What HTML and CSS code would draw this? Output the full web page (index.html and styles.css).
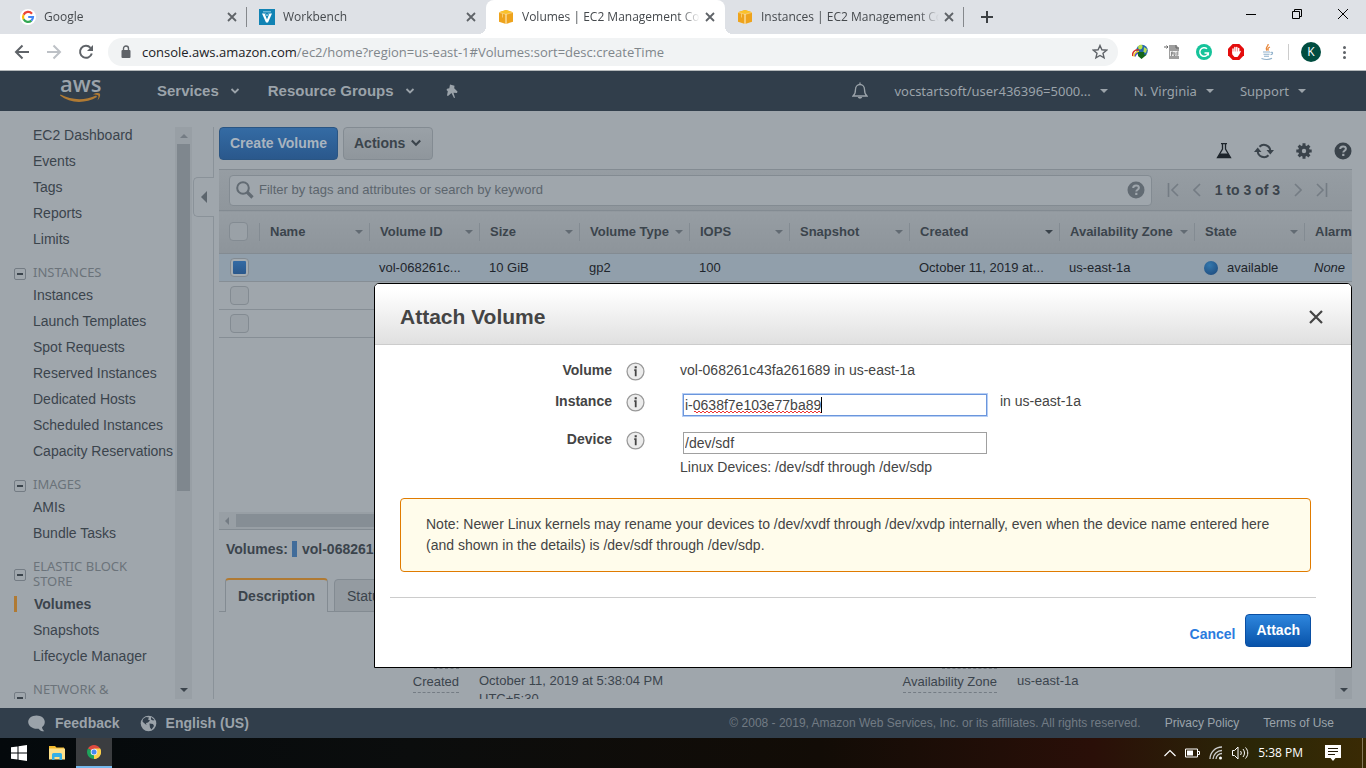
FILE: index.html
```html
<!DOCTYPE html>
<html lang="en">
<head>
<meta charset="utf-8">
<title>Volumes | EC2 Management Console</title>
<link rel="stylesheet" href="styles.css">
</head>
<body>
<svg class="defs" width="0" height="0" aria-hidden="true">
  <symbol id="x" viewBox="0 0 10 10"><path d="M1 1l8 8M9 1L1 9" fill="none" stroke="currentColor" stroke-width="1.800"/></symbol>
  <symbol id="cube" viewBox="0 0 16 16">
    <path d="M1 3.200L8 1l7 2.200v9.600L8 15l-7-2.200z" fill="#eea31c"/>
    <path d="M1 3.200L8 1l7 2.200L8 5z" fill="#fbc22a"/>
    <path d="M8 5v10" fill="none" stroke="#fff3cf" stroke-width="1"/>
    <path d="M1 3.400l7 1.900 7-1.900" fill="none" stroke="#fbe3a6" stroke-width=".6"/>
    <path d="M4.500 4.500v4" stroke="#fbdc8e" stroke-width=".7"/>
  </symbol>
  <symbol id="chev" viewBox="0 0 10 8"><path d="M1.500 2l3.500 3.500L8.500 2" fill="none" stroke="currentColor" stroke-width="1.800"/></symbol>
  <symbol id="help" viewBox="0 0 18 18"><circle cx="9" cy="9" r="8.500" fill="currentColor"/><path d="M6.200 7.100c0-1.700 1.200-2.700 2.900-2.700s2.800 1 2.800 2.400c0 1.900-2.600 1.900-2.600 3.800" fill="none" stroke="#9fa6ac" stroke-width="2"/><rect x="8.200" y="11.800" width="2.200" height="2.200" fill="#9fa6ac"/></symbol>
  <symbol id="info" viewBox="0 0 18 18"><circle cx="9" cy="9" r="8" fill="#ececec" stroke="#999" stroke-width="1.200"/><path d="M7.800 7.700H9.200V13.600" fill="none" stroke="#444" stroke-width="1.700"/><rect x="8.200" y="4" width="2" height="2" fill="#444"/></symbol>
</svg>

<header class="browser">
  <div class="tabs">
    <div class="tab">
      <svg class="fav" viewBox="0 0 16 16"><circle cx="8" cy="8" r="8" fill="#fff"/><path d="M12 4.700A5 5 0 0 0 3.600 5.700" fill="none" stroke="#ea4335" stroke-width="2.200"/><path d="M3.600 5.700a5 5 0 0 0 0 4.700" fill="none" stroke="#fbbc05" stroke-width="2.200"/><path d="M3.600 10.300a5 5 0 0 0 7.800 1.300" fill="none" stroke="#34a853" stroke-width="2.200"/><path d="M11.300 11.700A5 5 0 0 0 13 8H8.200" fill="none" stroke="#4285f4" stroke-width="2.200"/></svg>
      <span class="tab-title">Google</span>
      <button class="tab-x" aria-label="Close tab"><svg><use href="#x"/></svg></button>
    </div>
    <div class="tab">
      <svg class="fav" viewBox="0 0 16 16"><rect width="16" height="16" fill="#1183b4"/><path d="M3 4.500h2.600L8 10.500l2.400-6H13L9 13.500H7z" fill="#fff"/><path d="M4 2.800h8M6.500 4.500L8 7l1.500-2.500" fill="none" stroke="#b6deef" stroke-width=".8"/></svg>
      <span class="tab-title">Workbench</span>
      <button class="tab-x" aria-label="Close tab"><svg><use href="#x"/></svg></button>
    </div>
    <div class="tab active">
      <svg class="fav"><use href="#cube"/></svg>
      <span class="tab-title">Volumes | EC2 Management Console</span>
      <button class="tab-x" aria-label="Close tab"><svg><use href="#x"/></svg></button>
    </div>
    <div class="tab">
      <svg class="fav"><use href="#cube"/></svg>
      <span class="tab-title">Instances | EC2 Management Console</span>
      <button class="tab-x" aria-label="Close tab"><svg><use href="#x"/></svg></button>
    </div>
    <button class="new-tab" aria-label="New tab"><svg width="12" height="12" viewBox="0 0 12 12"><path d="M6 0v12M0 6h12" stroke="#3c4043" stroke-width="2"/></svg></button>
    <div class="win">
      <button aria-label="Minimize"><svg width="10" height="10" viewBox="0 0 10 10"><path d="M0 5.500h10" stroke="#000"/></svg></button>
      <button aria-label="Restore"><svg width="10" height="10" viewBox="0 0 10 10"><path d="M.5 2.500h7v7h-7zM2.500 2.500v-2h7v7h-2" fill="none" stroke="#000"/></svg></button>
      <button aria-label="Close"><svg width="10" height="10" viewBox="0 0 10 10"><path d="M0 0l10 10M10 0L0 10" stroke="#000"/></svg></button>
    </div>
  </div>
  <div class="toolbar">
    <button class="tool" aria-label="Back"><svg width="16" height="16" viewBox="0 0 16 16"><path d="M15 8H2M8.500 1.500L2 8l6.500 6.500" fill="none" stroke="#5f6368" stroke-width="2"/></svg></button>
    <button class="tool" aria-label="Forward"><svg width="16" height="16" viewBox="0 0 16 16"><path d="M1 8h13M7.500 1.500L14 8l-6.500 6.500" fill="none" stroke="#bdc1c6" stroke-width="2"/></svg></button>
    <button class="tool" aria-label="Reload"><svg width="16" height="16" viewBox="0 0 16 16"><path d="M13.800 9.500A6 6 0 1 1 12.500 3.800" fill="none" stroke="#5f6368" stroke-width="2"/><path d="M15 1v6H9z" fill="#5f6368"/></svg></button>
    <div class="omni">
      <svg width="10" height="14" viewBox="0 0 10 14"><rect x="0.500" y="5" width="9" height="8" rx="1" fill="#5f6368"/><path d="M2.500 5.500V3.500a2.500 2.500 0 0 1 5 0v2" fill="none" stroke="#5f6368" stroke-width="1.400"/></svg>
      <span class="url">console.aws.amazon.com<span>/ec2/home?region=us-east-1#Volumes:sort=desc:createTime</span></span>
      <button aria-label="Bookmark"><svg width="16" height="16" viewBox="0 0 16 16"><path d="M8 1.500l1.900 4.300 4.700.4-3.600 3.100 1.100 4.600L8 11.500l-4.100 2.400L5 9.300 1.400 6.200l4.700-.4z" fill="none" stroke="#5f6368" stroke-width="1.400"/></svg></button>
    </div>
    <div class="exts">
      <svg width="16" height="16" viewBox="0 0 16 16"><circle cx="10" cy="6.500" r="5.800" fill="#2566ae"/><path d="M6 2.500c2-2.500 5-2 4.500.5S8 6 6.500 5zM12 3l3 2-1 4-2.500-1z" fill="#b9e04c"/><path d="M.8 12a5 5 0 0 1 6-6" fill="none" stroke="#d33226" stroke-width="1.500"/><path d="M2 12.500a5 5 0 0 1 5-5" fill="none" stroke="#f5d21d" stroke-width="1.500"/><path d="M3.200 12.500A4 4 0 0 1 7 9" fill="none" stroke="#4c54c8" stroke-width="1.300"/><path d="M6 8h6v2.500h3L9.500 15 6 12z" fill="#14661a"/></svg>
      <svg width="16" height="16" viewBox="0 0 16 16"><path d="M5 1h7l3 3v11H5z" fill="#9e9e9e"/><path d="M12 1v3h3M0 3h4M2.500 1.500L4 3 2.500 4.500" fill="none" stroke="#666"/><rect x="6" y="7" width="9" height="5" fill="#f1f1f1"/><path d="M7.500 12V8h1.300v2H7.500M10 8v3.500h1V8.500M13 12V8h1.500M13 10h1.500" fill="none" stroke="#777" stroke-width=".8"/></svg>
      <svg width="16" height="16" viewBox="0 0 16 16"><circle cx="8" cy="8" r="8" fill="#15c39a"/><path d="M11 4.800A4.300 4.300 0 1 0 12.300 9H8.500M12.300 8.500v3" fill="none" stroke="#fff" stroke-width="1.500"/></svg>
      <svg width="16" height="16" viewBox="0 0 16 16"><path d="M4.700 0h6.600L16 4.700v6.600L11.300 16H4.700L0 11.300V4.700z" fill="#e40d0d"/><path d="M5 9V5M6.900 8V3.500M8.800 8V3.500M10.700 9V4.500" stroke="#fff" stroke-width="1.500" stroke-linecap="round"/><path d="M4.300 7.500h7l1-.8.600.8-1.900 3.500-1.500 2H6.500L4.300 10.500z" fill="#fff"/></svg>
      <svg width="14" height="16" viewBox="0 0 14 16"><path d="M8 0c1 2-3.500 3.500-1 6.500M10 3c-2 .8-2.800 2-1.500 3.500" fill="none" stroke="#e8873b" stroke-width="1.300"/><path d="M3 8h7M3.500 10.300h6M4 12.300h5M1.500 14.500c3 1 8 1 10.500-.2M10.500 8.500c3-1 2.500 1.800 0 2.300" fill="none" stroke="#8fb0ca" stroke-width="1.100"/></svg>
    </div>
    <span class="profile">K</span>
    <button class="dots" aria-label="Menu"><i></i><i></i><i></i></button>
  </div>
</header>

<nav class="aws-nav">
  <a class="logo" href="#" aria-label="aws"><svg width="42" height="28" viewBox="0 0 42 28"><text x="0" y="15" class="logo-text">aws</text><path d="M0 18.500c10 8 25 8.500 37 1.500l-.8-1.500C25 23.500 12 23.500.5 17.500z" fill="#b07a33"/><path d="M33 17.500c3-1.800 6-1.600 7-.8.700 1.500-.5 4.800-2.500 6.800.600-2 1.400-4 .8-5-.9-.9-3-.8-5.300-1z" fill="#b07a33"/></svg></a>
  <button class="menu big services">Services<svg width="10" height="8"><use href="#chev"/></svg></button>
  <button class="menu big">Resource Groups<svg width="10" height="8"><use href="#chev"/></svg></button>
  <button class="pin" aria-label="Pin"><svg width="14" height="15" viewBox="0 0 14 15"><path d="M5 .5l4.500 1.200-.3 2.600 3.300 3.200-.5 1.500-3.500-.3 1.500 5-1 .3-2.500-5L3 12l-1-.6.800-4.200L1.500 6l.6-1.200 2.200-.6z" fill="#9ba3aa"/></svg></button>
  <button class="bell" aria-label="Notifications"><svg width="16" height="18" viewBox="0 0 16 18"><path d="M1 14c2-1.500 2.500-3 2.500-6.500C3.500 4.500 5.500 2.500 8 2.500s4.500 2 4.500 5C12.500 11 13 12.500 15 14zM8 2.500V.5" fill="none" stroke="#9ba3aa" stroke-width="1.300"/><path d="M5.800 15h4.400c-.5 2.300-3.900 2.300-4.400 0z" fill="#9ba3aa"/></svg></button>
  <button class="menu">vocstartsoft/user436396=5000...<i class="tri"></i></button>
  <button class="menu">N. Virginia<i class="tri"></i></button>
  <button class="menu">Support<i class="tri"></i></button>
</nav>

<div class="console">
  <aside class="side">
    <div class="side-list">
      <ul>
        <li><a href="#">EC2 Dashboard</a></li>
        <li><a href="#">Events</a></li>
        <li><a href="#">Tags</a></li>
        <li><a href="#">Reports</a></li>
        <li><a href="#">Limits</a></li>
      </ul>
      <h3><button aria-label="Collapse"></button><span>INSTANCES</span></h3>
      <ul>
        <li><a href="#">Instances</a></li>
        <li><a href="#">Launch Templates</a></li>
        <li><a href="#">Spot Requests</a></li>
        <li><a href="#">Reserved Instances</a></li>
        <li><a href="#">Dedicated Hosts</a></li>
        <li><a href="#">Scheduled Instances</a></li>
        <li><a href="#">Capacity Reservations</a></li>
      </ul>
      <h3><button aria-label="Collapse"></button><span>IMAGES</span></h3>
      <ul>
        <li><a href="#">AMIs</a></li>
        <li><a href="#">Bundle Tasks</a></li>
      </ul>
      <h3><button aria-label="Collapse"></button><span>ELASTIC BLOCK STORE</span></h3>
      <ul>
        <li class="current"><a href="#">Volumes</a></li>
        <li><a href="#">Snapshots</a></li>
        <li><a href="#">Lifecycle Manager</a></li>
      </ul>
      <h3><button aria-label="Collapse"></button><span>NETWORK &amp; SECURITY</span></h3>
    </div>
    <div class="vbar"><i class="up"></i><b></b><i class="down"></i></div>
  </aside>
  <div class="split"><button aria-label="Hide navigation"><i></i></button></div>

  <main class="main">
    <div class="actions">
      <button class="btn primary">Create Volume</button>
      <button class="btn plain">Actions<svg width="12" height="10"><use href="#chev"/></svg></button>
      <div class="action-icons">
        <button aria-label="Experiments"><svg width="16" height="16" viewBox="0 0 16 16"><path d="M5 .7h6M6.500 1v5L1.500 14.500h13L9.500 6V1" fill="none" stroke="#1d242b" stroke-width="1.300"/><path d="M4 10.500h8l2.800 4.500H1.200z" fill="#1d242b"/></svg></button>
        <button aria-label="Refresh"><svg width="20" height="18" viewBox="0 0 20 18"><path d="M5.500 4.800a6.300 6.300 0 0 1 10.800 3.700M14.500 13.200A6.300 6.300 0 0 1 3.700 9.500" fill="none" stroke="#3a434b" stroke-width="2"/><path d="M12.500 8H20l-3.700 4.500zM0 10h7.500L3.700 5.500z" fill="#3a434b"/></svg></button>
        <button aria-label="Settings"><svg width="16" height="16" viewBox="0 0 16 16"><circle cx="8" cy="8" r="4" fill="none" stroke="#3a434b" stroke-width="3.600"/><path d="M8 .3v15.400M.3 8h15.400M2.600 2.600l10.800 10.800M13.400 2.600L2.600 13.400" stroke="#3a434b" stroke-width="3"/><circle cx="8" cy="8" r="2.200" fill="#9fa6ac"/></svg></button>
        <button aria-label="Help"><svg width="18" height="18"><use href="#help"/></svg></button>
      </div>
    </div>
    <div class="filter">
      <div class="search">
        <svg width="18" height="18" viewBox="0 0 18 18"><circle cx="7" cy="7" r="5.800" fill="none" stroke="#626b73" stroke-width="2"/><path d="M11 11l5.500 5.500" stroke="#626b73" stroke-width="3.200"/></svg>
        <input type="text" aria-label="Filter volumes" placeholder="Filter by tags and attributes or search by keyword">
        <button aria-label="Filter help"><svg width="18" height="18"><use href="#help"/></svg></button>
      </div>
      <div class="pager">
        <button aria-label="First page"><svg width="12" height="14" viewBox="0 0 12 14"><path d="M1.500 0v14M11 1L5 7l6 6" fill="none" stroke="#747c84" stroke-width="1.600"/></svg></button>
        <button aria-label="Previous page"><svg width="8" height="14" viewBox="0 0 8 14"><path d="M7 1L1 7l6 6" fill="none" stroke="#747c84" stroke-width="1.600"/></svg></button>
        <span>1 to 3 of 3</span>
        <button aria-label="Next page"><svg width="8" height="14" viewBox="0 0 8 14"><path d="M1 1l6 6-6 6" fill="none" stroke="#747c84" stroke-width="1.600"/></svg></button>
        <button aria-label="Last page"><svg width="12" height="14" viewBox="0 0 12 14"><path d="M10.500 0v14M1 1l6 6-6 6" fill="none" stroke="#747c84" stroke-width="1.600"/></svg></button>
      </div>
    </div>
    <div class="grid-pane">
      <table>
        <colgroup><col class="w40"><col class="w110"><col class="w110"><col class="w100"><col class="w110"><col class="w100"><col class="w120"><col class="w150"><col class="w135"><col class="w110"><col class="w110"></colgroup>
        <thead>
          <tr>
            <th><input type="checkbox" aria-label="Select all"></th>
            <th><div>Name<i class="tri"></i></div></th>
            <th><div>Volume ID<i class="tri"></i></div></th>
            <th><div>Size<i class="tri"></i></div></th>
            <th><div>Volume Type<i class="tri"></i></div></th>
            <th><div>IOPS<i class="tri"></i></div></th>
            <th><div>Snapshot<i class="tri"></i></div></th>
            <th><div>Created<i class="tri sorted"></i></div></th>
            <th><div>Availability Zone<i class="tri"></i></div></th>
            <th><div>State<i class="tri"></i></div></th>
            <th><div>Alarm Status</div></th>
          </tr>
        </thead>
        <tbody>
          <tr class="selected">
            <td><input type="checkbox" checked aria-label="Select volume"></td>
            <td></td><td>vol-068261c...</td><td>10 GiB</td><td>gp2</td><td>100</td><td></td>
            <td>October 11, 2019 at...</td><td>us-east-1a</td>
            <td><span class="state"><i></i>available</span></td><td><em>None</em></td>
          </tr>
          <tr><td><input type="checkbox" aria-label="Select volume"></td><td></td><td></td><td></td><td></td><td></td><td></td><td></td><td></td><td></td><td></td></tr>
          <tr><td><input type="checkbox" aria-label="Select volume"></td><td></td><td></td><td></td><td></td><td></td><td></td><td></td><td></td><td></td><td></td></tr>
        </tbody>
      </table>
    </div>
    <div class="hbar"><i></i><b></b></div>
    <div class="picked">Volumes:<i></i>vol-068261c43fa261689</div>
    <div class="subtabs"><button class="on">Description</button><button>Status Checks</button></div>
    <div class="details">
      <dl>
        <div><dt><span>Volume ID</span></dt><dd>vol-068261c43fa261689</dd></div>
        <div><dt><span>Alarm status</span></dt><dd>None</dd></div>
        <div><dt><span>Size</span></dt><dd>10 GiB</dd></div>
        <div><dt><span>Snapshot</span></dt><dd></dd></div>
        <div><dt><span>Created</span></dt><dd>October 11, 2019 at 5:38:04 PM<br>UTC+5:30</dd></div>
        <div><dt><span>Availability Zone</span></dt><dd>us-east-1a</dd></div>
      </dl>
      <div class="vbar"><i class="down"></i></div>
    </div>
  </main>
</div>

<footer class="aws-foot">
  <a class="strong" href="#"><svg width="18" height="17" viewBox="0 0 18 17"><path d="M8.500.5c4.700 0 8.300 2.800 8.300 6.500 0 2.400-1.400 4.200-2.800 5.300.200 1.500.8 2.700 2.300 4-2.200.3-4.500-.8-5.700-2.600C4.800 14.500.2 11 .2 7 .2 3.300 3.800.5 8.500.5z" fill="#9ba3aa"/></svg>Feedback</a>
  <a class="strong" href="#"><svg width="17" height="17" viewBox="0 0 17 17"><circle cx="8.500" cy="8.500" r="7.800" fill="#9ba3aa"/><path d="M3 4l3-2 3 .5-1 2 2 1-2 2-2 .5.500 2L4 8 2.500 6.500zM11 2l3.500 3-1.500.5-2-1zM9.500 8.500l3.500.5 1 2-2.500 3.500-1.500-2z" fill="#313e4b"/></svg>English (US)</a>
  <span class="copy">© 2008 - 2019, Amazon Web Services, Inc. or its affiliates. All rights reserved.</span>
  <a href="#">Privacy Policy</a>
  <a href="#">Terms of Use</a>
</footer>

<div class="taskbar">
  <button aria-label="Start"><svg width="16" height="16" viewBox="0 0 16 16"><path d="M0 2.300L6.500 1.400v6.100H0zM7.500 1.200L16 0v7.500H7.500zM0 8.500h6.500v6.100L0 13.700zM7.500 8.500H16V16l-8.500-1.200z" fill="#fff"/></svg></button>
  <button aria-label="File Explorer"><svg width="16" height="16" viewBox="0 0 16 16"><path d="M0 1h6l1.500 1.500H15V5H0z" fill="#f3b92c"/><rect y="3.500" width="16" height="11" fill="#fde08a"/><path d="M3 15V9.500a1.500 1.500 0 0 1 1.500-1.500h7A1.500 1.500 0 0 1 13 9.500V15h-2.500v-3h-5v3z" fill="#35b0e6"/></svg></button>
  <button class="running" aria-label="Google Chrome"><svg width="14" height="14" viewBox="0 0 14 14"><path d="M7 7L.94 3.500A7 7 0 0 1 13.060 3.500z" fill="#e04a3f"/><path d="M7 7l6.060-3.500A7 7 0 0 1 7 14z" fill="#fdd04a"/><path d="M7 7v7A7 7 0 0 1 .94 3.500z" fill="#1ea35a"/><path d="M7 3.600h6.100A7 7 0 0 1 7 14l3-5.200z" fill="#fdd04a"/><circle cx="7" cy="7" r="3.300" fill="#f1f1f1"/><circle cx="7" cy="7" r="2.500" fill="#4688f1"/></svg></button>
  <div class="tray">
    <svg width="12" height="8" viewBox="0 0 12 8"><path d="M.5 7L6 1.500 11.500 7" fill="none" stroke="#fff" stroke-width="1.200"/></svg>
    <svg width="15" height="10" viewBox="0 0 15 10"><path d="M.5 1h12v8H.5zM13 3.500h1.500v3H13" fill="none" stroke="#fff"/><rect x="2" y="2.500" width="6" height="5" fill="#fff"/></svg>
    <svg width="14" height="14" viewBox="0 0 14 14"><path d="M1 13A12 12 0 0 1 13 1M4 13a9 9 0 0 1 9-8.500M7 13a6 6 0 0 1 6-5.500" fill="none" stroke="#ccc" stroke-width="1.300"/><circle cx="11.500" cy="12" r="1.500" fill="#fff"/></svg>
    <svg width="17" height="14" viewBox="0 0 17 14"><path d="M.5 4.500h2L6 1v12L2.500 9.500h-2z" fill="none" stroke="#fff"/><path d="M8.500 5c1 1.300 1 2.700 0 4M11 3c2 2.500 2 5.500 0 8M13.500 1.500c3 3.300 3 7.700 0 11" fill="none" stroke="#fff"/></svg>
    <time>5:38 PM</time>
    <svg class="note-icon" width="16" height="16" viewBox="0 0 16 16"><path d="M0 0h16v13h-5.500L8 16l-2.500-3H0z" fill="#fff"/><path d="M3 3.500h10M3 6.500h10M3 9.500h7" stroke="#221a08"/></svg>
  </div>
</div>

<section class="modal" role="dialog" aria-labelledby="dlg">
  <header><h2 id="dlg">Attach Volume</h2><button aria-label="Close"><svg width="14" height="14" viewBox="0 0 14 14"><path d="M1 1l12 12M13 1L1 13" stroke="#444" stroke-width="2.200"/></svg></button></header>
  <form>
    <div class="row"><span class="lab">Volume</span><svg width="19" height="19"><use href="#info"/></svg><p>vol-068261c43fa261689 in us-east-1a</p></div>
    <div class="row"><label class="lab" for="inst">Instance</label><svg width="19" height="19"><use href="#info"/></svg><div class="box spelled"><input id="inst" class="focus" type="text" spellcheck="false" value="i-0638f7e103e77ba89"></div><p>in us-east-1a</p></div>
    <div class="row"><label class="lab" for="dev">Device</label><svg width="19" height="19"><use href="#info"/></svg><div class="box"><input id="dev" type="text" value="/dev/sdf"></div></div>
    <p class="hint">Linux Devices: /dev/sdf through /dev/sdp</p>
    <p class="note">Note: Newer Linux kernels may rename your devices to /dev/xvdf through /dev/xvdp internally, even when the device name entered here (and shown in the details) is /dev/sdf through /dev/sdp.</p>
    <div class="buttons"><a href="#">Cancel</a><button type="button" class="btn attach">Attach</button></div>
  </form>
</section>
</body>
</html>
```
FILE: styles.css
```css
* { box-sizing: border-box; }
body {
  margin: 0;
  position: relative;
  height: 100vh;
  min-height: 768px;
  display: flex;
  flex-direction: column;
  overflow: hidden;
  background: #9fa6ac;
  color: #3b444c;
  font: 14px/16px "Liberation Sans", Arial, sans-serif;
}
button { border: 0; padding: 0; background: none; font: inherit; color: inherit; }
a { color: inherit; text-decoration: none; }
ul, dl, dd, p, h2, h3 { margin: 0; padding: 0; }
ul { list-style: none; }
svg { display: block; flex: none; }
.defs { position: absolute; }

/* browser frame */
.browser { flex: none; font-family: "Open Sans", "Noto Sans", sans-serif; border-bottom: 1px solid #b4b8ba; background: #fff; }
.tabs { display: flex; height: 34px; padding-left: 8px; background: #dee1e6; }
.tab { position: relative; flex: 0 1 239px; min-width: 0; display: flex; align-items: center; gap: 8px; padding: 0 9px 0 12px; font-size: 12px; color: #45494d; }
.tab::after { content: ""; position: absolute; right: 0; top: 7px; width: 1px; height: 20px; background: #85888c; }
.tab.active { background: #fff; border-radius: 8px 8px 0 0; }
.tab.active::after { right: -8px; top: 26px; width: 8px; height: 8px; background: radial-gradient(circle at 100% 0, transparent 8px, #fff 8px); }
.tab.active::before { content: ""; position: absolute; left: -8px; top: 26px; width: 8px; height: 8px; background: radial-gradient(circle at 0 0, transparent 8px, #fff 8px); }
.tab:nth-child(2)::after { display: none; }
.fav { width: 16px; height: 16px; }
.tab-title { flex: 1; overflow: hidden; white-space: nowrap; margin-right: -4px; mask-image: linear-gradient(to right, #000 calc(100% - 20px), transparent); }
.tab-x svg { width: 10px; height: 10px; margin: 0 1px; color: #5f6368; }
.new-tab { width: 46px; display: grid; place-items: center; }
.win { margin-left: auto; display: flex; height: 28px; }
.win button { width: 46px; display: grid; place-items: center; }
.toolbar { display: flex; align-items: center; height: 36px; padding-left: 6px; }
.tool { width: 32px; display: grid; place-items: center; }
.omni { flex: 1; display: flex; align-items: center; gap: 11px; height: 28px; margin-left: 6px; padding: 0 10px 0 13px; border-radius: 14px; background: #f1f3f4; }
.url { flex: 1; font-size: 13px; color: #202124; white-space: nowrap; }
.url span { color: #80868b; }
.exts { display: flex; align-items: center; gap: 16px; padding: 0 14px; border-right: 1px solid #ccc; }
.profile { width: 20px; height: 20px; margin: 0 22px 0 12px; border-radius: 50%; background: #004d40; color: #fff; font-size: 12px; line-height: 20px; text-align: center; }
.dots { display: grid; gap: 2px; margin-right: 20px; }
.dots i { width: 3px; height: 3px; border-radius: 50%; background: #5f6368; }

/* console navigation */
.aws-nav { flex: none; display: flex; align-items: center; height: 40px; padding: 0 60px; background: #313e4b; color: #9ba3aa; }
.logo { margin-right: 55px; }
.logo svg { overflow: visible; }
.logo-text { font: 600 22px "Open Sans", sans-serif; fill: #9ba3aa; }
.menu { display: flex; align-items: center; gap: 9px; margin-left: 26px; font: 13px/18px "Noto Sans", sans-serif; white-space: nowrap; }
.menu.big { gap: 11px; margin-left: 28px; font: bold 15px/18px "Liberation Sans", Arial, sans-serif; }
.menu.services { margin-left: 0; }
.pin { margin-left: 30px; }
.bell { margin-left: auto; }
.tri { flex: none; width: 0; height: 0; border: 4px solid transparent; border-top-color: currentColor; border-bottom: 0; }

/* sidebar */
.console { flex: 1; min-height: 0; display: flex; padding: 16px 14px 9px 0; }
.side { flex: none; width: 192px; display: flex; }
.side-list { flex: 1; min-width: 0; overflow: hidden; padding-left: 14px; }
.side li { padding-left: 19px; margin-bottom: 10px; white-space: nowrap; }
.side .current { padding-left: 17px; border-left: 3px solid #b07a33; font-weight: bold; }
.side h3 { display: flex; align-items: center; gap: 7px; margin: 18px 0 7px; padding-right: 20px; font: 13px/15px "Noto Sans", sans-serif; color: #6b737a; }
.side h3 button { flex: none; width: 12px; height: 12px; margin-top: 2px; border: 1px solid #747c84; border-radius: 2px; background: linear-gradient(#3b444c, #3b444c) center / 6px 2px no-repeat; }
.vbar { flex: none; width: 17px; display: flex; flex-direction: column; align-items: center; background: #989fa5; }
.vbar b { width: 13px; height: 347px; background: #7f878e; }
.vbar .up { margin: 7px 0 6px; border: 4px solid transparent; border-bottom-color: #747c84; border-top: 0; }
.vbar .down { margin: auto 0 7px; border: 4px solid transparent; border-top-color: #3b444c; border-bottom: 0; }
.split { flex: none; width: 22px; margin-right: 5px; padding-top: 50px; background: linear-gradient(#8a9299, #8a9299) right / 1px 100% no-repeat; }
.split button { width: 21px; height: 40px; margin-left: 1px; display: grid; place-items: center; border: 1px solid #8a9299; border-right: 0; border-radius: 5px 0 0 5px; background: #9fa6ac; }
.split i { border: 6px solid transparent; border-right-color: #5c656d; border-left: 0; }

/* main panel */
.main { flex: 1; min-width: 0; display: flex; flex-direction: column; }
.actions { flex: none; display: flex; align-items: flex-start; gap: 5px; height: 42px; }
.btn { height: 33px; padding: 0 10px 1px; border: 1px solid; border-radius: 4px; font-weight: bold; }
.primary { border-color: #2a5583; background: linear-gradient(#346ba4, #2a588c); color: #a9b4bf; }
.plain { display: flex; align-items: center; gap: 5px; border-color: #838b92; background: linear-gradient(#9aa1a7, #8f969c); }
.action-icons { margin: 15px 0 0 auto; display: flex; align-items: center; gap: 22px; color: #3a434b; }
.filter { flex: none; display: flex; align-items: center; height: 41px; padding-left: 10px; border-top: 1px solid #838b92; background: linear-gradient(#969da3, #8f969c); }
.search { flex: 1; display: flex; align-items: center; gap: 5px; height: 31px; padding: 0 6px; border: 1px solid #838b92; border-radius: 4px; background: #9fa6ac; color: #626b73; }
.search input { flex: 1; min-width: 0; border: 0; padding: 0; background: none; font: 13px/16px "Liberation Sans", Arial, sans-serif; }
.search input::placeholder { color: #5c656d; opacity: 1; }
.pager { flex: none; display: flex; align-items: center; gap: 14px; padding: 0 24px 0 15px; font-weight: bold; }
.grid-pane { flex: 1; min-height: 0; overflow: hidden; }
table { width: 1195px; table-layout: fixed; border-collapse: collapse; font-size: 13px; color: #1e252c; }
.w40 { width: 40px; } .w100 { width: 100px; } .w110 { width: 110px; } .w120 { width: 120px; } .w135 { width: 135px; } .w150 { width: 150px; }
th { height: 43px; padding: 0 0 1px; text-align: left; color: #3b444c; border-top: 1px solid #838b92; border-bottom: 1px solid #838b92; background: linear-gradient(#969da3, #8d949a); }
th div { display: flex; align-items: center; justify-content: space-between; height: 18px; padding: 0 6px 0 10px; border-left: 1px solid #838b92; white-space: nowrap; }
th .tri { color: #626b73; }
th .sorted { color: #3a434b; }
td { height: 28px; padding: 0 0 0 10px; border-bottom: 1px solid #868e95; white-space: nowrap; overflow: hidden; }
td:first-child { padding-left: 11px; }
th:first-child { padding-left: 10px; }
.selected { background: #919fab; }
input[type=checkbox] { appearance: none; display: block; width: 19px; height: 19px; margin: 0; border: 1px solid #838b92; border-radius: 4px; background: #9aa1a7; }
input[type=checkbox]:checked { border-color: #838b92; background: linear-gradient(#346ba4, #2a588c) content-box, #a5acb1; padding: 2px; }
.state { display: flex; align-items: center; gap: 9px; }
.state i { width: 14px; height: 14px; border-radius: 50%; background: radial-gradient(circle at 40% 30%, #3478ad, #1c4678); }
.hbar { flex: none; display: flex; align-items: center; height: 18px; border-bottom: 1px solid #838b92; background: #989fa5; }
.hbar i { margin: 0 7px 0 6px; border: 4px solid transparent; border-right-color: #747c84; border-left: 0; }
.hbar b { flex: 1; height: 13px; background: #868e95; }
.picked { flex: none; display: flex; align-items: center; height: 48px; padding: 0 7px 10px; font-weight: bold; }
.picked i { width: 5px; height: 16px; margin: 0 5px 0 4px; background: #416c9a; }
.subtabs { flex: none; display: flex; align-items: flex-end; gap: 6px; height: 34px; padding-left: 6px; background: linear-gradient(#838b92, #838b92) bottom / 100% 1px no-repeat; }
.subtabs button { height: 33px; padding: 0 12px; border: 1px solid #838b92; border-radius: 4px 4px 0 0; background: #949ba1; }
.subtabs .on { height: 34px; border-top: 2px solid #b07a33; border-bottom: 0; background: #9fa6ac; font-weight: bold; }
.details { flex: none; height: 87px; display: flex; overflow: hidden; font-size: 13px; }
.details dl { flex: 1; height: 100px; display: grid; grid-template-columns: 1fr 1fr; grid-auto-rows: 24px; padding: 12px 40px 0 0; line-height: 20px; }
.details dl div { display: grid; grid-template-columns: 240px 1fr; gap: 20px; align-items: start; line-height: 18px; }
.details dt { text-align: right; height: 21px; line-height: 20px; }
.details dt span { display: inline-block; border-bottom: 1px dashed #747c84; }

/* console footer */
.aws-foot { flex: none; display: flex; align-items: center; height: 30px; padding: 0 32px 0 28px; background: #313e4b; color: #9ba3aa; font-size: 12px; }
.aws-foot a { margin-left: 24px; }
.aws-foot .strong { display: flex; align-items: center; gap: 9px; margin: 0 20px 0 0; font-size: 14px; font-weight: bold; }
.copy { margin-left: auto; color: #717b84; }

/* taskbar */
.taskbar { flex: none; display: flex; height: 30px; background: linear-gradient(to right, #04090c, #0b0d0d 30%, #120c06 60%, #2a0f08 80%, #2b2707 92%, #3a2a04); color: #fff; }
.taskbar button { width: 38px; display: grid; place-items: center; }
.taskbar .running { width: 36px; background: #3b3d40; border-bottom: 2px solid #76b9ed; }
.tray { margin-left: auto; display: flex; align-items: center; gap: 9px; padding-right: 21px; border-right: 1px solid #85795c; margin-right: 3px; }
.tray time { font: 12px/18px "Open Sans", sans-serif; }
.note-icon { margin-left: 13px; }

/* dialog */
.modal { position: absolute; top: 283px; left: 374px; right: 14px; border: 1px solid #000; border-radius: 5px 5px 0 0; background: #fff; color: #444; }
.modal header { display: flex; align-items: center; justify-content: space-between; height: 61px; padding: 6px 28px 0 25px; border-bottom: 1px solid #ccc; border-radius: 4px 4px 0 0; background: linear-gradient(#fff 10%, #e0e0e0); }
.modal h2 { font-size: 21px; line-height: 24px; }
.modal form { padding: 17px 40px 20px 25px; }
.row { display: flex; align-items: flex-start; min-height: 31px; }
.row + .row + .row { margin-top: 7px; }
.lab { width: 212px; text-align: right; font-weight: bold; }
.row svg { margin: 0 35px 0 14px; }
.box { position: relative; padding-left: 3px; margin-right: 13px; }
.box input { display: block; width: 304px; height: 22px; margin-top: 1px; padding: 1px; border: 1px solid #a0a0a0; background: #fff; color: #444; font: 14px/16px "Liberation Sans", Arial, sans-serif; }
.box input.focus { border-color: #6b96dc; outline: 1px solid #b7cff5; }
.spelled::before { content: ""; position: absolute; left: 14px; top: 18px; width: 127px; height: 2px; background: repeating-linear-gradient(to right, #e33 0 2px, transparent 2px 4px) top / 100% 1px no-repeat, repeating-linear-gradient(to right, transparent 0 2px, #e33 2px 4px) bottom / 100% 1px no-repeat; z-index: 1; }
.spelled::after { content: ""; position: absolute; left: 141px; top: 4px; width: 1px; height: 16px; background: #000; }
.hint { margin: -3px 0 23px 280px; }
.note { padding: 15px 25px; border: 1px solid #e07b00; border-radius: 4px; background: #fffceb; line-height: 21px; }
.buttons { display: flex; align-items: center; justify-content: flex-end; gap: 10px; margin: 25px -5px 0 -10px; padding: 16px 5px 0; border-top: 1px solid #ccc; }
.buttons a { margin-top: 7px; color: #2a7bde; font-weight: bold; }
.attach { border-color: #0a4fa3; background: linear-gradient(#2e86dd, #0853aa); color: #fff; }
```
